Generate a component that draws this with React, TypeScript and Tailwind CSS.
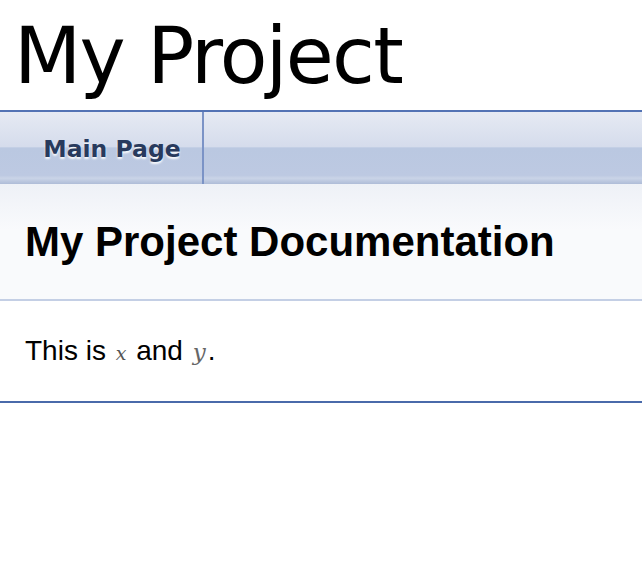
export default function App() {
  return (
    <div className="w-[642px] h-[578px] bg-white overflow-hidden">
      {/* Title area */}
      <div className="h-[110px] pl-[14px] flex items-center">
        <div className="font-['DejaVu_Sans',sans-serif] text-[78px] leading-none text-black tracking-[-1.7px] mt-[2px]">
          My Project
        </div>
      </div>

      {/* Tabs */}
      <div className="border-t-2 border-[#5373B4] h-[74px] flex bg-[linear-gradient(to_bottom,#e6eaf3_0%,#d5dcec_48%,#bac8e1_50%,#bdc9e2_88%,#cad4e7_92%,#aebcd8_100%)]">
        <div className="w-[204px] border-r-2 border-[#7b93c6] flex items-center justify-center pt-[4px]">
          <span className="font-['DejaVu_Sans',sans-serif] font-bold text-[23.5px] text-[#283A5D] [text-shadow:0_2px_2px_rgba(255,255,255,0.9)] pl-[22px]">
            Main Page
          </span>
        </div>
      </div>

      {/* Header */}
      <div className="h-[117px] border-b-2 border-[#C4CFE5] bg-[linear-gradient(to_bottom,#eef1f7_0%,#f9fafc_40%)] flex items-center px-[25px]">
        <h1 className="font-['Liberation_Sans',sans-serif] font-bold text-[42px] text-black">
          My Project Documentation
        </h1>
      </div>

      {/* Contents */}
      <div className="h-[102px] border-b-2 border-[#4A6AAA] px-[25px] pt-[30px]">
        <p className="font-['Liberation_Sans',sans-serif] text-[28px] text-black leading-[40px]">
          This is{' '}
          <span className="font-['DejaVu_Serif',serif] italic text-[19px] text-[#555] mx-[2px]">x</span>{' '}
          and{' '}
          <span className="font-['DejaVu_Serif',serif] italic text-[23px] text-[#666] mx-[2px]">y</span>.
        </p>
      </div>
    </div>
  )
}
